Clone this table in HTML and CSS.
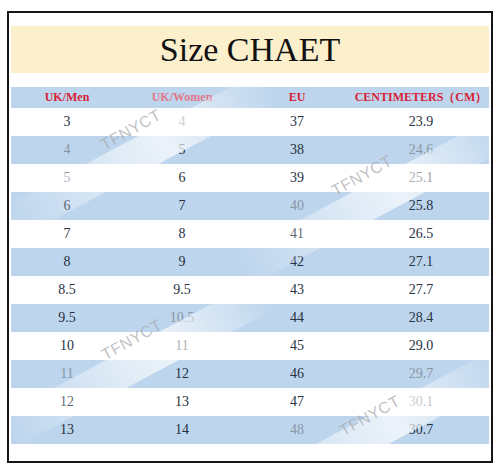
FILE: index.html
```html
<!DOCTYPE html>
<html>
<head>
<meta charset="utf-8">
<link rel="stylesheet" href="styles.css">
</head>
<body>
<div class="frame">
  <div class="title">Size CHAET</div>
  <div class="table">
    <div class="row head">
      <div class="c">UK/Men</div>
      <div class="c dimhead">UK/Women</div>
      <div class="c">EU</div>
      <div class="c">CENTIMETERS（CM）</div>
    </div>
    <div class="row"><div class="c">3</div><div class="c dim">4</div><div class="c">37</div><div class="c">23.9</div></div>
    <div class="row alt"><div class="c dim">4</div><div class="c">5</div><div class="c">38</div><div class="c dim">24.6</div></div>
    <div class="row"><div class="c dim">5</div><div class="c">6</div><div class="c">39</div><div class="c">25.1</div></div>
    <div class="row alt"><div class="c">6</div><div class="c">7</div><div class="c dim">40</div><div class="c">25.8</div></div>
    <div class="row"><div class="c">7</div><div class="c">8</div><div class="c">41</div><div class="c">26.5</div></div>
    <div class="row alt"><div class="c">8</div><div class="c">9</div><div class="c">42</div><div class="c">27.1</div></div>
    <div class="row"><div class="c">8.5</div><div class="c">9.5</div><div class="c">43</div><div class="c">27.7</div></div>
    <div class="row alt"><div class="c">9.5</div><div class="c dim">10.5</div><div class="c">44</div><div class="c">28.4</div></div>
    <div class="row"><div class="c">10</div><div class="c">11</div><div class="c">45</div><div class="c">29.0</div></div>
    <div class="row alt"><div class="c dim">11</div><div class="c">12</div><div class="c">46</div><div class="c dim">29.7</div></div>
    <div class="row"><div class="c">12</div><div class="c">13</div><div class="c">47</div><div class="c dim">30.1</div></div>
    <div class="row alt"><div class="c">13</div><div class="c">14</div><div class="c dim">48</div><div class="c">30.7</div></div>
  </div>
  <div class="band b1"></div>
  <div class="band b2"></div>
  <div class="band b3"></div>
  <div class="band b4"></div>
  <div class="wm w1">TFNYCT</div>
  <div class="wm w2">TFNYCT</div>
  <div class="wm w3">TFNYCT</div>
  <div class="wm w4">TFNYCT</div>
</div>
</body>
</html>
```
FILE: styles.css
```css
html, body {
  margin: 0;
  padding: 0;
  background: #ffffff;
}
.frame {
  position: relative;
  box-sizing: border-box;
  width: 486px;
  height: 452px;
  margin: 11px 0 0 7px;
  border: 2px solid #151515;
  padding: 13px 2px 0 2px;
  overflow: hidden;
  background: #ffffff;
}
.title {
  height: 47px;
  background: #fcefcc;
  display: flex;
  align-items: center;
  justify-content: center;
  font-family: "Liberation Serif", serif;
  font-size: 34px;
  color: #111111;
  line-height: 1;
}
.table {
  margin-top: 14px;
  display: flex;
  flex-direction: column;
}
.row {
  display: grid;
  grid-template-columns: 112px 118px 112px 1fr;
  height: 28px;
  align-items: center;
  font-family: "Liberation Serif", serif;
  font-size: 14px;
  color: #27313f;
}
.row.alt {
  background: #bdd5ed;
}
.row.head {
  height: 21px;
  background: #bdd5ed;
  color: #d81e36;
  font-size: 12px;
  font-weight: bold;
}
.c {
  text-align: center;
  white-space: nowrap;
}
.dim {
  color: #8b96a4;
}
.dimhead {
  color: #e2768a;
}
.band {
  position: absolute;
  width: 300px;
  height: 34px;
  background: linear-gradient(90deg, rgba(255,255,255,0) 0%, rgba(255,255,255,0.55) 45%, rgba(255,255,255,0.7) 60%, rgba(255,255,255,0) 100%);
  transform: rotate(-28deg);
}
.b1 { left: -20px; top: 125px; }
.b2 { left: 215px; top: 170px; }
.b3 { left: -20px; top: 332px; }
.b4 { left: 210px; top: 405px; }
.wm {
  position: absolute;
  font-family: "Liberation Sans", sans-serif;
  font-size: 16px;
  color: rgba(170,172,176,0.75);
  letter-spacing: 0.5px;
  transform: rotate(-29deg);
  transform-origin: center;
}
.w1 { left: 89px; top: 108px; }
.w2 { left: 320px; top: 154px; }
.w3 { left: 90px; top: 318px; }
.w4 { left: 328px; top: 394px; }
```
